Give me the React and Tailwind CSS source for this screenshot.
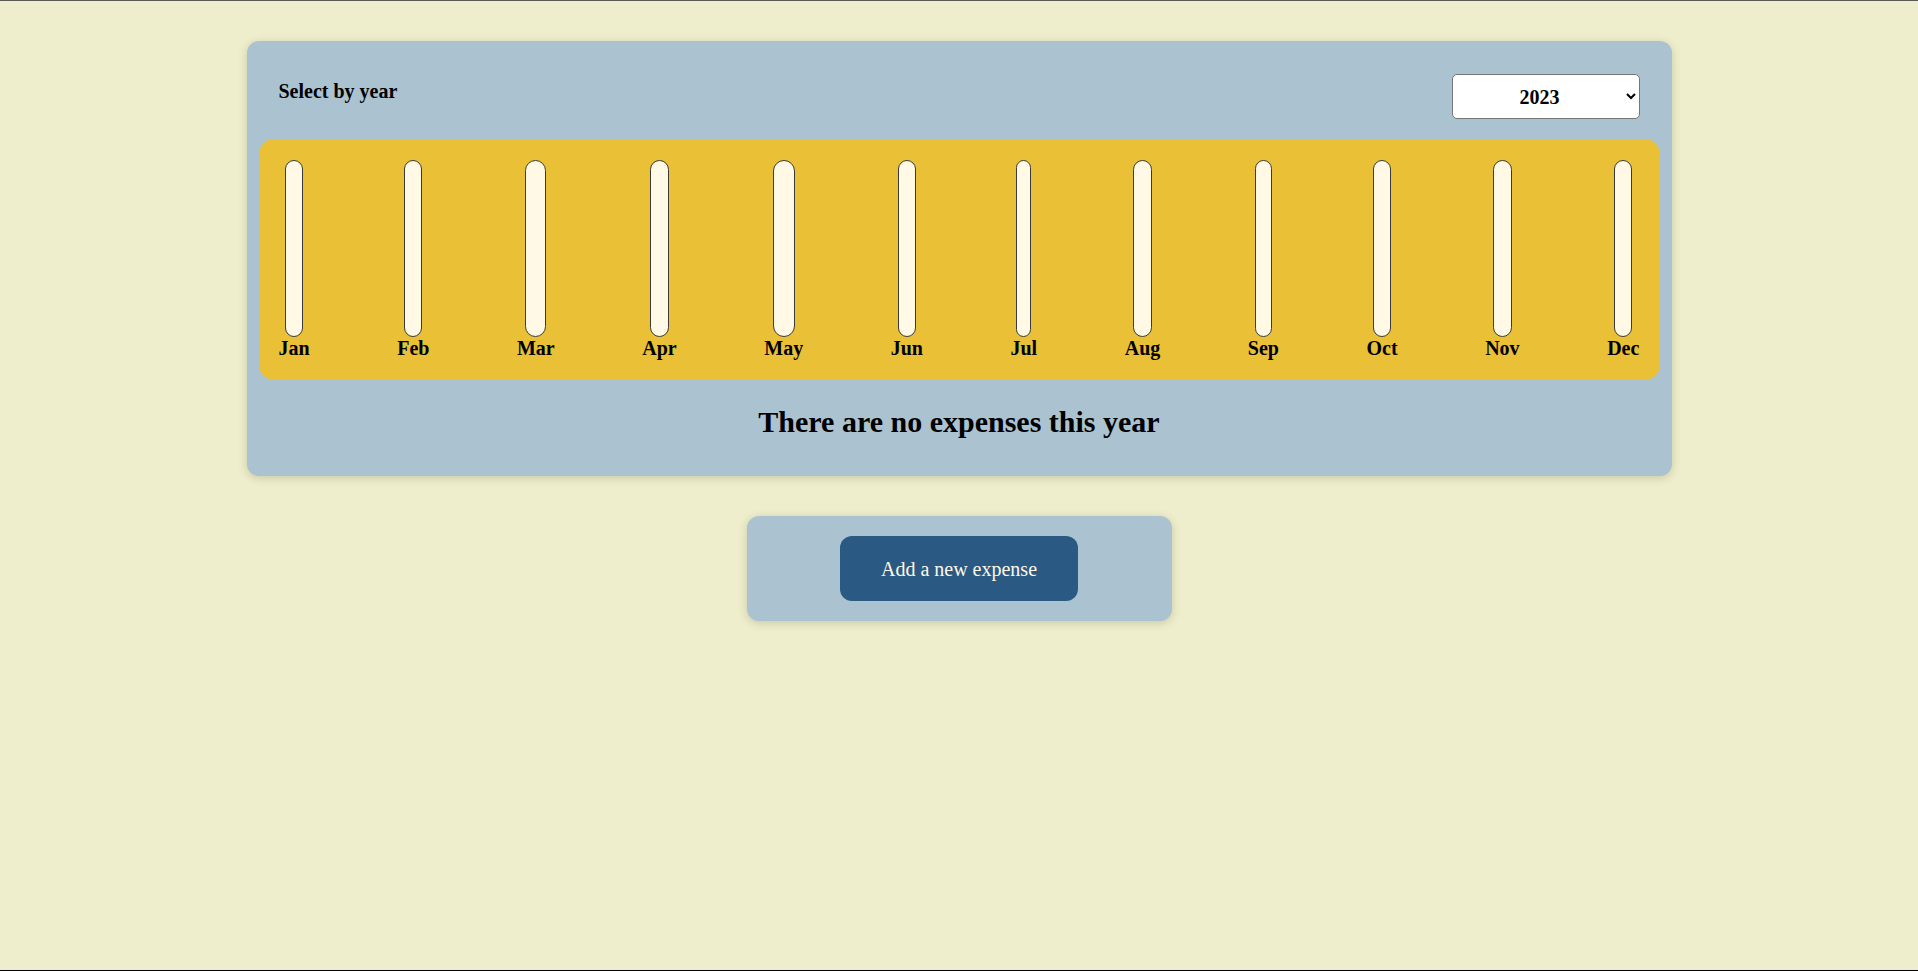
const MONTHS = ["Jan", "Feb", "Mar", "Apr", "May", "Jun", "Jul", "Aug", "Sep", "Oct", "Nov", "Dec"];

const Bar = ({ label }) => (
  <div className="flex flex-col items-center">
    <div className="h-[177px] w-[56%] rounded-full border border-[#3a3a3a] bg-[#fff9e6]" />
    <span className="text-[20px] font-bold leading-[23px] text-black">{label}</span>
  </div>
);

export default function App() {
  return (
    <div
      className="flex h-screen flex-col items-center border-t border-b border-t-[#5a5a5a] border-b-black bg-[#eeeecd] pt-[40px]"
      style={{ fontFamily: '"Liberation Serif", "Times New Roman", serif' }}
    >
      <div className="w-[1425px] rounded-xl bg-[#abc3d0] px-3 pt-[33px] pb-[37px] shadow-[0_2px_8px_rgba(90,90,60,0.25)]">
        <div className="flex items-start justify-between px-5">
          <p className="mt-[6px] text-[20px] font-bold leading-[23px] text-black">Select by year</p>
          <select
            defaultValue="2023"
            className="h-[45px] w-[188px] rounded-[5px] border border-[#767676] bg-white px-2 text-center text-[20px] font-bold text-black"
          >
            <option value="2023">2023</option>
            <option value="2022">2022</option>
            <option value="2021">2021</option>
          </select>
        </div>

        <div className="mt-[20px] flex items-end justify-between rounded-[15px] bg-[#eac036] px-5 pt-[21px] pb-[20px]">
          {MONTHS.map((m) => (
            <Bar key={m} label={m} />
          ))}
        </div>

        <h2 className="mt-[25px] text-center text-[30px] font-bold leading-[34px] text-black">
          There are no expenses this year
        </h2>
      </div>

      <div className="mt-[40px] flex w-[425px] justify-center rounded-xl bg-[#abc3d0] py-5 shadow-[0_2px_8px_rgba(90,90,60,0.25)]">
        <button
          type="button"
          className="h-[65px] w-[238px] rounded-xl bg-[#2a5a84] text-[20px] text-[#fff8e8]"
        >
          Add a new expense
        </button>
      </div>
    </div>
  );
}
